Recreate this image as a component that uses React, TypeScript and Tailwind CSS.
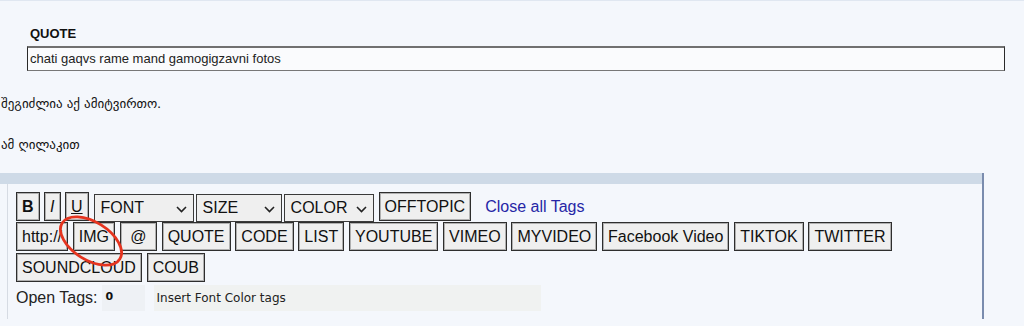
import React from "react";

function Btn({ children, className = "" }: { children: React.ReactNode; className?: string }) {
  return (
    <div
      className={
        "h-[29px] flex items-center justify-center px-[5px] border border-[#2e2e2e] bg-[#efefef] shadow-[inset_0_0_0_1px_#b0b0b0] text-[16px] text-[#111] leading-none whitespace-nowrap shrink-0 " +
        className
      }
    >
      {children}
    </div>
  );
}

function Sel({ label, w }: { label: string; w: string }) {
  return (
    <div
      className={
        "h-[28px] mt-[2px] flex items-center justify-between pl-[6px] pr-[6px] border border-[#3a3a3a] bg-[#efefef] text-[16px] text-[#111] leading-none shrink-0 " +
        w
      }
    >
      <span>{label}</span>
      <svg width="11" height="7" viewBox="0 0 11 7" className="mt-[2px]">
        <path d="M1 1 L5.5 5.5 L10 1" fill="none" stroke="#222" strokeWidth="1.6" />
      </svg>
    </div>
  );
}

export default function App() {
  const row2 = ["IMG", "@", "QUOTE", "CODE", "LIST", "YOUTUBE", "VIMEO", "MYVIDEO", "Facebook Video", "TIKTOK", "TWITTER"];
  return (
    <div className="relative w-[1024px] h-[326px] overflow-hidden bg-[#f4f7fc] border-t border-[#e0e7f1] font-['Liberation_Sans',Arial,sans-serif] text-[#111]">
      {/* quote block */}
      <div className="pl-[27px] pr-[19px] pt-[25px]">
        <div className="pl-[3px] text-[13px] leading-[15px] font-bold text-[#111]">QUOTE</div>
        <div className="mt-[5px] h-[25px] flex items-center pl-[2px] bg-[#fafbfd] border border-[#2a2a2a] border-t-2 border-t-[#707070] border-b-[#777] text-[13px] text-[#222]">
          chati gaqvs rame mand gamogigzavni fotos
        </div>
      </div>

      {/* georgian lines */}
      <div className="mt-[25px] pl-[1px] text-[13px] leading-[16px] font-['DejaVu_Sans','Noto_Sans',sans-serif] text-[#111]">
        შეგიძლია აქ ამიტვირთო.
      </div>
      <div className="mt-[25px] pl-[1px] text-[13px] leading-[16px] font-['DejaVu_Sans','Noto_Sans',sans-serif] text-[#111]">
        ამ ღილაკით
      </div>

      {/* toolbar panel */}
      <div className="mt-[20px] w-[984px] h-[146px] border-r-2 border-[#7a8cae] flex flex-col">
        <div className="h-[11px] bg-[#cedae7]" />
        <div className="flex-1 ml-[7px] border-l border-[#d6dbe3] pl-[8px] pt-[8px] flex flex-col">
          {/* row 1 */}
          <div className="flex items-start h-[30px]">
            <div className="flex gap-[4.5px]">
              <Btn className="font-bold">B</Btn>
              <Btn className="italic">I</Btn>
              <Btn className="underline">U</Btn>
            </div>
            <div className="flex gap-[2px] ml-[5px]">
              <Sel label="FONT" w="w-[100px]" />
              <Sel label="SIZE" w="w-[86px]" />
              <Sel label="COLOR" w="w-[90px]" />
            </div>
            <Btn className="ml-[5px]">OFFTOPIC</Btn>
            <span className="ml-[14px] mt-[5px] text-[16px] leading-[19px] text-[#2626a6]">Close all Tags</span>
          </div>
          {/* row 2 */}
          <div className="flex gap-[4.8px] mt-[0px]">
            <Btn>http://</Btn>
            {row2.map((t) => (
              <Btn key={t} className={t === "@" ? "w-[37px]" : ""}>
                {t}
              </Btn>
            ))}
          </div>
          {/* row 3 */}
          <div className="flex gap-[5px] mt-[2px]">
            <Btn>SOUNDCLOUD</Btn>
            <Btn>COUB</Btn>
          </div>
          {/* row 4 */}
          <div className="flex items-center mt-[2px] h-[27px]">
            <span className="text-[16px] text-[#222] leading-none">Open Tags:</span>
            <div className="ml-[4px] w-[43px] h-[26px] bg-[#eef1f5] flex items-center pl-[4px] text-[11px] font-bold font-['DejaVu_Sans',sans-serif] text-[#111]">
              0
            </div>
            <div className="ml-[9px] w-[387px] h-[26px] bg-[#f0f2f1] flex items-center pl-[3px] text-[12px] font-['DejaVu_Sans',sans-serif] text-[#222]">
              Insert Font Color tags
            </div>
          </div>
        </div>
      </div>

      {/* red annotation ellipse */}
      <svg className="absolute left-[50px] top-[206px] pointer-events-none" width="84" height="68" viewBox="0 0 84 68">
        <ellipse cx="41" cy="34" rx="34" ry="19" transform="rotate(32 41 34)" fill="none" stroke="#e5341f" strokeWidth="2.8" />
      </svg>
    </div>
  );
}
